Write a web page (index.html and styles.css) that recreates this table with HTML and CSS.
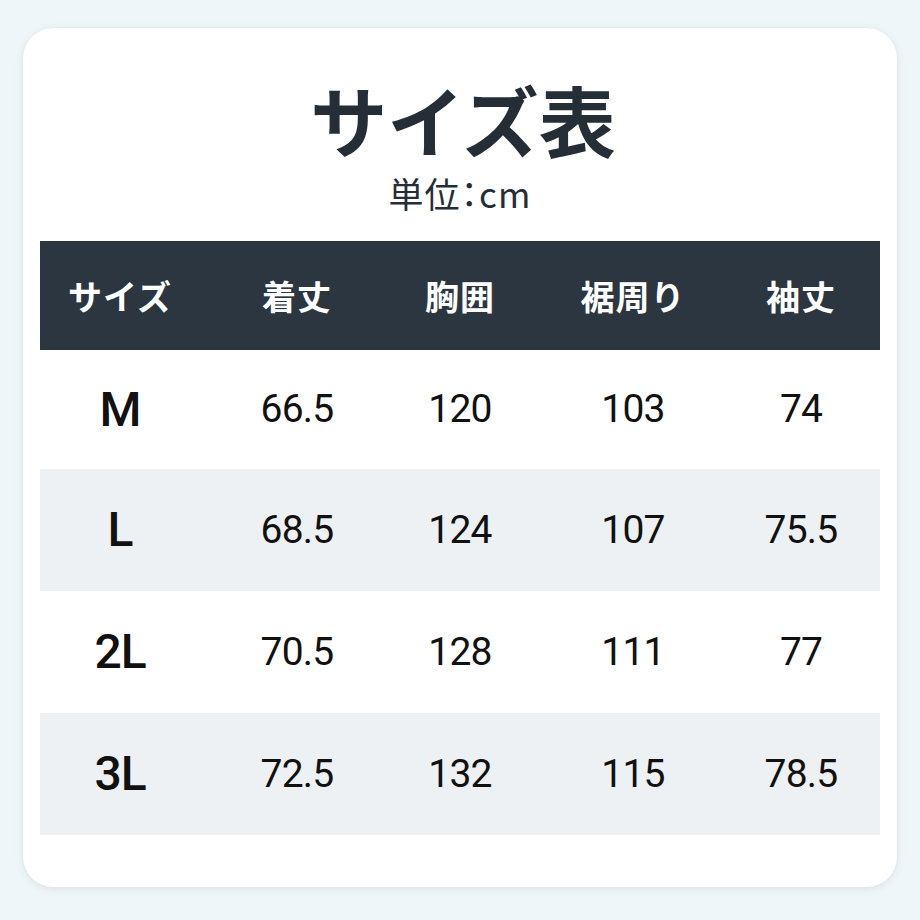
FILE: index.html
```html
<!DOCTYPE html>
<html lang="ja">
<head>
<meta charset="utf-8">
<title>サイズ表</title>
<link rel="stylesheet" href="styles.css">
</head>
<body>
<div class="page">
  <div class="card">
    <h1 class="title">サイズ表</h1>
    <p class="unit">単位：cm</p>
    <div class="table">
      <div class="row head">
        <div class="cell">サイズ</div>
        <div class="cell">着丈</div>
        <div class="cell">胸囲</div>
        <div class="cell">裾周り</div>
        <div class="cell">袖丈</div>
      </div>
      <div class="row">
        <div class="cell size">M</div>
        <div class="cell">66.5</div>
        <div class="cell">120</div>
        <div class="cell">103</div>
        <div class="cell">74</div>
      </div>
      <div class="row alt">
        <div class="cell size">L</div>
        <div class="cell">68.5</div>
        <div class="cell">124</div>
        <div class="cell">107</div>
        <div class="cell">75.5</div>
      </div>
      <div class="row">
        <div class="cell size">2L</div>
        <div class="cell">70.5</div>
        <div class="cell">128</div>
        <div class="cell">111</div>
        <div class="cell">77</div>
      </div>
      <div class="row alt">
        <div class="cell size">3L</div>
        <div class="cell">72.5</div>
        <div class="cell">132</div>
        <div class="cell">115</div>
        <div class="cell">78.5</div>
      </div>
    </div>
  </div>
</div>
</body>
</html>
```
FILE: styles.css
```css
html, body {
  margin: 0;
  padding: 0;
  background: #eff6f9;
}
.page {
  width: 920px;
  height: 920px;
  box-sizing: border-box;
  padding: 28px 23px 33px 23px;
}
.card {
  background: #ffffff;
  border-radius: 30px;
  box-shadow: 0 2px 8px rgba(60, 80, 100, 0.10), 0 0 2px rgba(60, 80, 100, 0.08);
  padding: 52px 17px 49px 17px;
  height: 859px;
  box-sizing: border-box;
  display: flex;
  flex-direction: column;
  align-items: stretch;
}
.title {
  margin: 0;
  font-family: "Noto Sans CJK JP", "Noto Sans", sans-serif;
  font-weight: 700;
  font-size: 77px;
  line-height: 78px;
  color: #252e37;
  text-align: center;
  padding-left: 6px;
}
.unit {
  margin: 17px 0 0 0;
  font-family: "Noto Sans CJK JP", "Noto Sans", sans-serif;
  font-weight: 400;
  font-size: 35px;
  line-height: 36px;
  color: #252e37;
  text-align: center;
  font-feature-settings: "palt";
  letter-spacing: 1px;
}
.table {
  margin-top: 30px;
  display: flex;
  flex-direction: column;
}
.row {
  display: grid;
  grid-template-columns: 160px 194px 132px 214px 122px;
  padding-right: 18px;
  height: 122px;
  align-items: center;
  justify-items: center;
  background: #ffffff;
  font-family: Roboto, "Liberation Sans", sans-serif;
  font-size: 39px;
  letter-spacing: -0.8px;
  color: #111111;
}
.row:nth-child(2) {
  height: 119px;
}
.row.alt {
  background: #eef1f4;
}
.row.head {
  height: 109px;
  background: #2b3640;
  color: #ffffff;
  font-family: "Noto Sans CJK JP", "Noto Sans", sans-serif;
  font-weight: 700;
  font-size: 34px;
  letter-spacing: 1px;
}
.cell {
  line-height: 1;
}
.cell.size {
  font-size: 48px;
  font-weight: 500;
  letter-spacing: -1px;
}
```
